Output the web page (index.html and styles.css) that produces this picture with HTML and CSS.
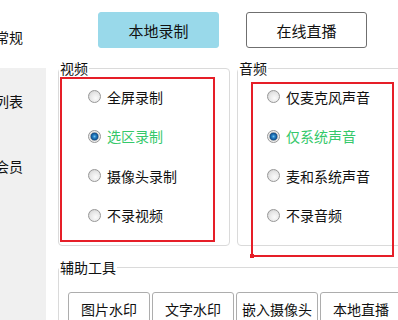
FILE: index.html
```html
<!DOCTYPE html>
<html lang="zh-CN">
  <head>
    <meta charset="UTF-8" />
    <title>录制设置</title>
    <link rel="stylesheet" href="styles.css">
  </head>
  <body>
    <div class="window">
      <!-- 左侧导航 -->
      <nav class="sidebar">
        <div class="nav-item active"><span>常规</span></div>
        <div class="nav-item"><span>列表</span></div>
        <div class="nav-item"><span>会员</span></div>
      </nav>

      <main class="content">
        <div class="mode-tabs">
          <button class="tab active">本地录制</button>
          <button class="tab">在线直播</button>
        </div>

        <div class="groups">
          <fieldset class="group">
            <legend>视频</legend>
            <label class="radio"><span class="dot"></span>全屏录制</label>
            <label class="radio checked"><span class="dot"></span>选区录制</label>
            <label class="radio"><span class="dot"></span>摄像头录制</label>
            <label class="radio"><span class="dot"></span>不录视频</label>
          </fieldset>

          <fieldset class="group audio">
            <legend>音频</legend>
            <label class="radio"><span class="dot"></span>仅麦克风声音</label>
            <label class="radio checked"><span class="dot"></span>仅系统声音</label>
            <label class="radio"><span class="dot"></span>麦和系统声音</label>
            <label class="radio"><span class="dot"></span>不录音频</label>
          </fieldset>
        </div>

        <fieldset class="group tools">
          <legend>辅助工具</legend>
          <div class="tool-row">
            <button class="tool">图片水印</button>
            <button class="tool">文字水印</button>
            <button class="tool">嵌入摄像头</button>
            <button class="tool">本地直播</button>
          </div>
        </fieldset>
      </main>

      <!-- 红框标注 -->
      <div class="mark mark-video"></div>
      <div class="mark mark-audio"></div>
    </div>
  </body>
</html>
```

FILE: styles.css
```css
body {
  margin: 0;
  background: #fff;
  font-family: "Noto Sans CJK SC", "Noto Sans", sans-serif;
  font-size: 14px;
  color: #111;
}

.window {
  position: relative;
  display: flex;
  width: 398px;
  height: 320px;
  overflow: hidden;
}

/* 左侧导航 */
.sidebar {
  flex: 0 0 46px;
  width: 46px;
  min-width: 0;
  overflow: hidden;
  background: #f0f0f0;
}

.sidebar .nav-item {
  display: flex;
  justify-content: flex-end;
  align-items: center;
  height: 65px;
  padding-right: 23px;
  overflow: hidden;
  white-space: nowrap;
  line-height: 14px;
}

.sidebar .nav-item span {
  flex-shrink: 0;
}

.sidebar .nav-item.active {
  height: 68px;
  padding-top: 6px;
  box-sizing: border-box;
  background: #fff;
}

/* 主区域 */
.content {
  flex: 1;
  min-width: 0;
  padding-left: 12px;
}

.mode-tabs {
  display: flex;
  gap: 27px;
  margin: 12px 0 0 40px;
}

.tab {
  flex-shrink: 0;
  width: 121px;
  height: 36px;
  padding: 0;
  background: #fff;
  border: 1px solid #6f6f6f;
  border-radius: 3px;
  font-family: inherit;
  font-size: 15px;
  color: #111;
}

.tab.active {
  background: #99d9ea;
  border-color: #99d9ea;
}

.groups {
  display: flex;
  gap: 7px;
  margin-top: 13px;
}

.group {
  flex-shrink: 0;
  width: 172px;
  box-sizing: border-box;
  margin: 0;
  padding: 2px 0 10px;
  border: 1px solid #dadada;
  border-radius: 4px;
  min-width: 0;
}

.group legend {
  padding: 0 1px;
  line-height: 14px;
  font-size: 14px;
}

.radio {
  display: flex;
  align-items: center;
  height: 39.5px;
  padding-left: 29px;
  line-height: 14px;
  white-space: nowrap;
}

.radio .dot {
  flex-shrink: 0;
  width: 13px;
  height: 13px;
  margin-right: 6px;
  box-sizing: border-box;
  border: 1px solid #979797;
  border-radius: 50%;
  background: radial-gradient(circle at 60% 65%, #fbfbfb 0, #e6e6e6 55%, #c8c8c8 100%);
}

.radio.checked {
  color: #35c86a;
}

.radio.checked .dot {
  background: radial-gradient(circle at 50% 50%, #6ec6f2 0, #2a82c6 1.5px, #0f4f8c 3.5px, #bdbdbd 4.2px, #efefef 5px, #d2d2d2 100%);
}

.tools {
  width: 400px;
  margin-top: 14px;
  padding: 18px 0 0;
  border-bottom: none;
}

.tool-row {
  display: flex;
  gap: 2px;
  margin-left: 9px;
}

.tool {
  flex-shrink: 0;
  width: 82px;
  height: 34px;
  padding: 0;
  background: #fff;
  border: 1px solid #adadad;
  border-radius: 3px;
  font-family: inherit;
  font-size: 14px;
  color: #111;
}

/* 红框标注 */
.mark {
  position: absolute;
  border: 2px solid #e61e28;
}

.mark-video {
  left: 60px;
  top: 77px;
  width: 151px;
  height: 161px;
}

.mark-audio {
  left: 251px;
  top: 82px;
  width: 139px;
  height: 171px;
}

.mark-audio::after {
  content: "";
  position: absolute;
  left: -3px;
  bottom: -3px;
  width: 4px;
  height: 4px;
  background: #e61e28;
}
```
